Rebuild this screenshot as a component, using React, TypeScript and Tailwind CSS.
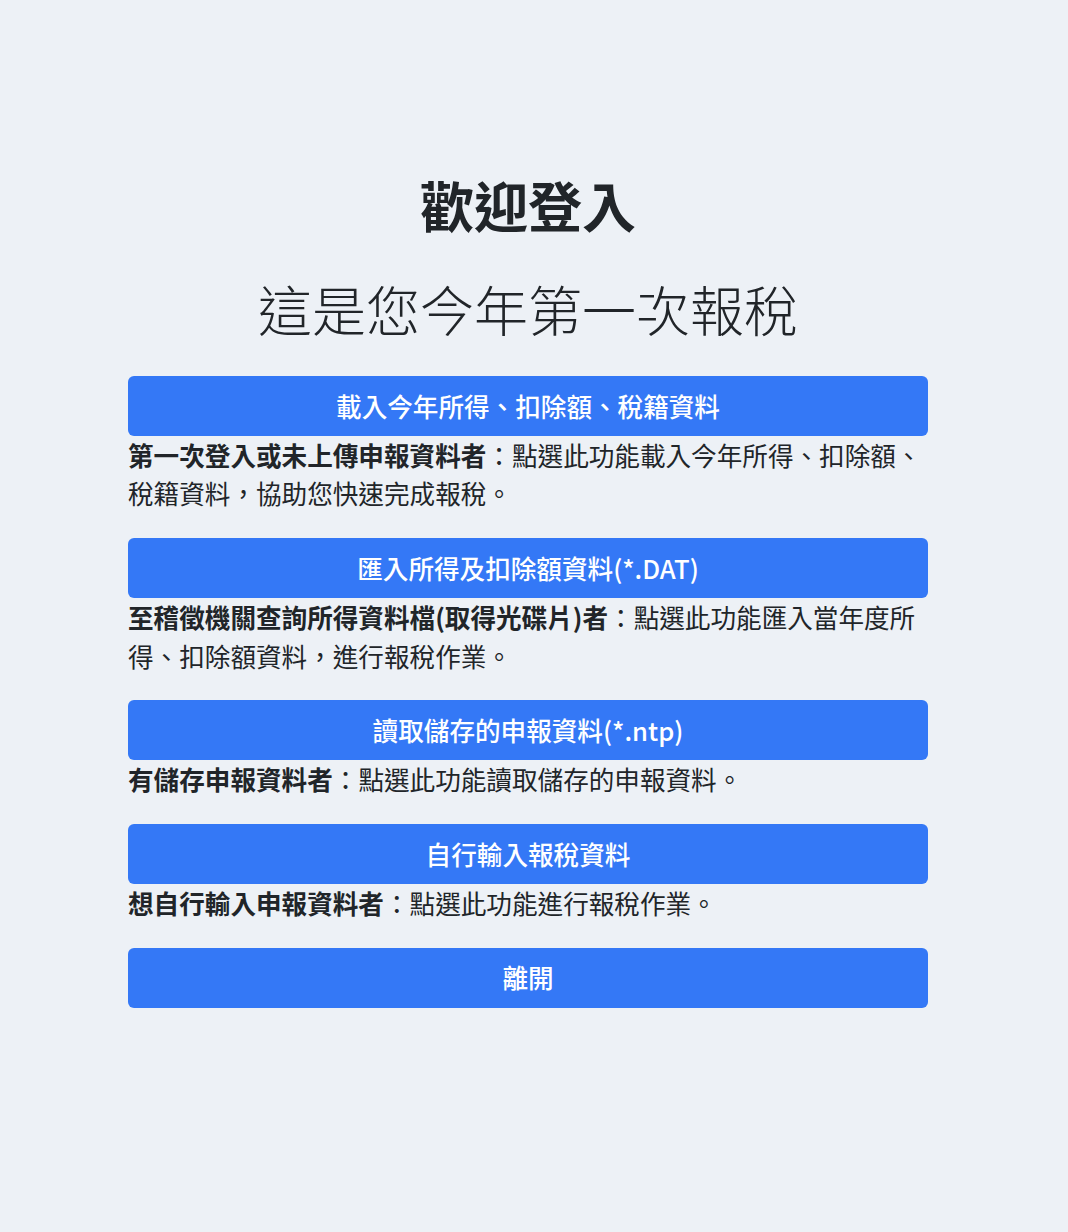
import React from "react";

const items = [
  {
    btn: "載入今年所得、扣除額、稅籍資料",
    bold: "第一次登入或未上傳申報資料者",
    rest: "點選此功能載入今年所得、扣除額、稅籍資料，協助您快速完成報稅。",
  },
  {
    btn: "匯入所得及扣除額資料(*.DAT)",
    bold: "至稽徵機關查詢所得資料檔(取得光碟片)者",
    rest: "點選此功能匯入當年度所得、扣除額資料，進行報稅作業。",
  },
  {
    btn: "讀取儲存的申報資料(*.ntp)",
    bold: "有儲存申報資料者",
    rest: "點選此功能讀取儲存的申報資料。",
  },
  {
    btn: "自行輸入報稅資料",
    bold: "想自行輸入申報資料者",
    rest: "點選此功能進行報稅作業。",
  },
];

export default function App() {
  return (
    <div
      className="min-h-[1232px] w-full bg-[#edf1f6] pl-[128px] text-[#212529]"
      style={{ fontFamily: '"Noto Sans CJK TC", "Noto Sans", sans-serif' }}
    >
      <div className="w-[800px] pt-[172px]">
        <h1 className="text-center text-[54px] font-bold leading-[65px]">歡迎登入</h1>
        <h2 className="mt-[39px] text-center text-[54px] font-light leading-[65px]">
          這是您今年第一次報稅
        </h2>
        <div className="mt-[35px] flex flex-col">
          {items.map((it) => (
            <div key={it.btn} className="mb-[25.3px] flex flex-col">
              <button className="h-[60px] w-full rounded-md bg-[#3478f6] text-[25.6px] font-medium text-white">
                {it.btn}
              </button>
              <p className="text-[25.6px] leading-[38.4px]">
                <span className="font-bold">{it.bold}</span>：{it.rest}
              </p>
            </div>
          ))}
          <button className="h-[60px] w-full rounded-md bg-[#3478f6] text-[25.6px] font-medium text-white">
            離開
          </button>
        </div>
      </div>
    </div>
  );
}
